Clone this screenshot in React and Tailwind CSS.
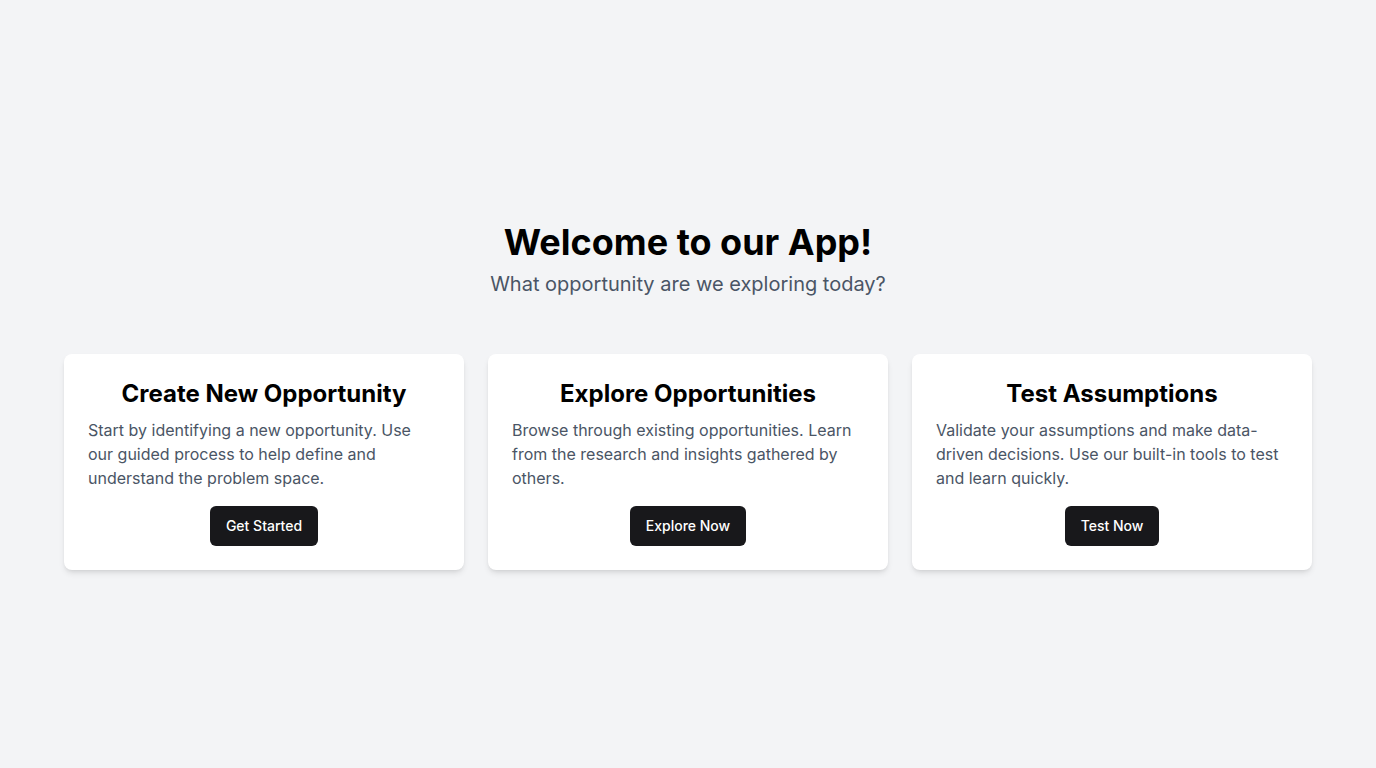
const cards = [
  {
    title: 'Create New Opportunity',
    text: 'Start by identifying a new opportunity. Use our guided process to help define and understand the problem space.',
    action: 'Get Started',
  },
  {
    title: 'Explore Opportunities',
    text: 'Browse through existing opportunities. Learn from the research and insights gathered by others.',
    action: 'Explore Now',
  },
  {
    title: 'Test Assumptions',
    text: 'Validate your assumptions and make data-driven decisions. Use our built-in tools to test and learn quickly.',
    action: 'Test Now',
  },
];

export default function App() {
  return (
    <div className="flex min-h-screen flex-col items-center justify-center bg-gray-100 px-16 pt-6 font-['Inter',sans-serif]">
      <h1 className="text-4xl font-bold text-black">Welcome to our App!</h1>
      <p className="mt-2 text-xl text-gray-600">What opportunity are we exploring today?</p>

      <div className="mt-14 grid w-full grid-cols-3 gap-6">
        {cards.map((card) => (
          <div key={card.title} className="flex flex-col rounded-lg bg-white p-6 shadow-md">
            <h2 className="text-center text-2xl font-bold text-black">{card.title}</h2>
            <p className="mt-2 text-base text-gray-600">{card.text}</p>
            <div className="mt-4 flex justify-center">
              <button className="h-10 rounded-md bg-zinc-900 px-4 text-sm font-medium text-white">
                {card.action}
              </button>
            </div>
          </div>
        ))}
      </div>
    </div>
  );
}
